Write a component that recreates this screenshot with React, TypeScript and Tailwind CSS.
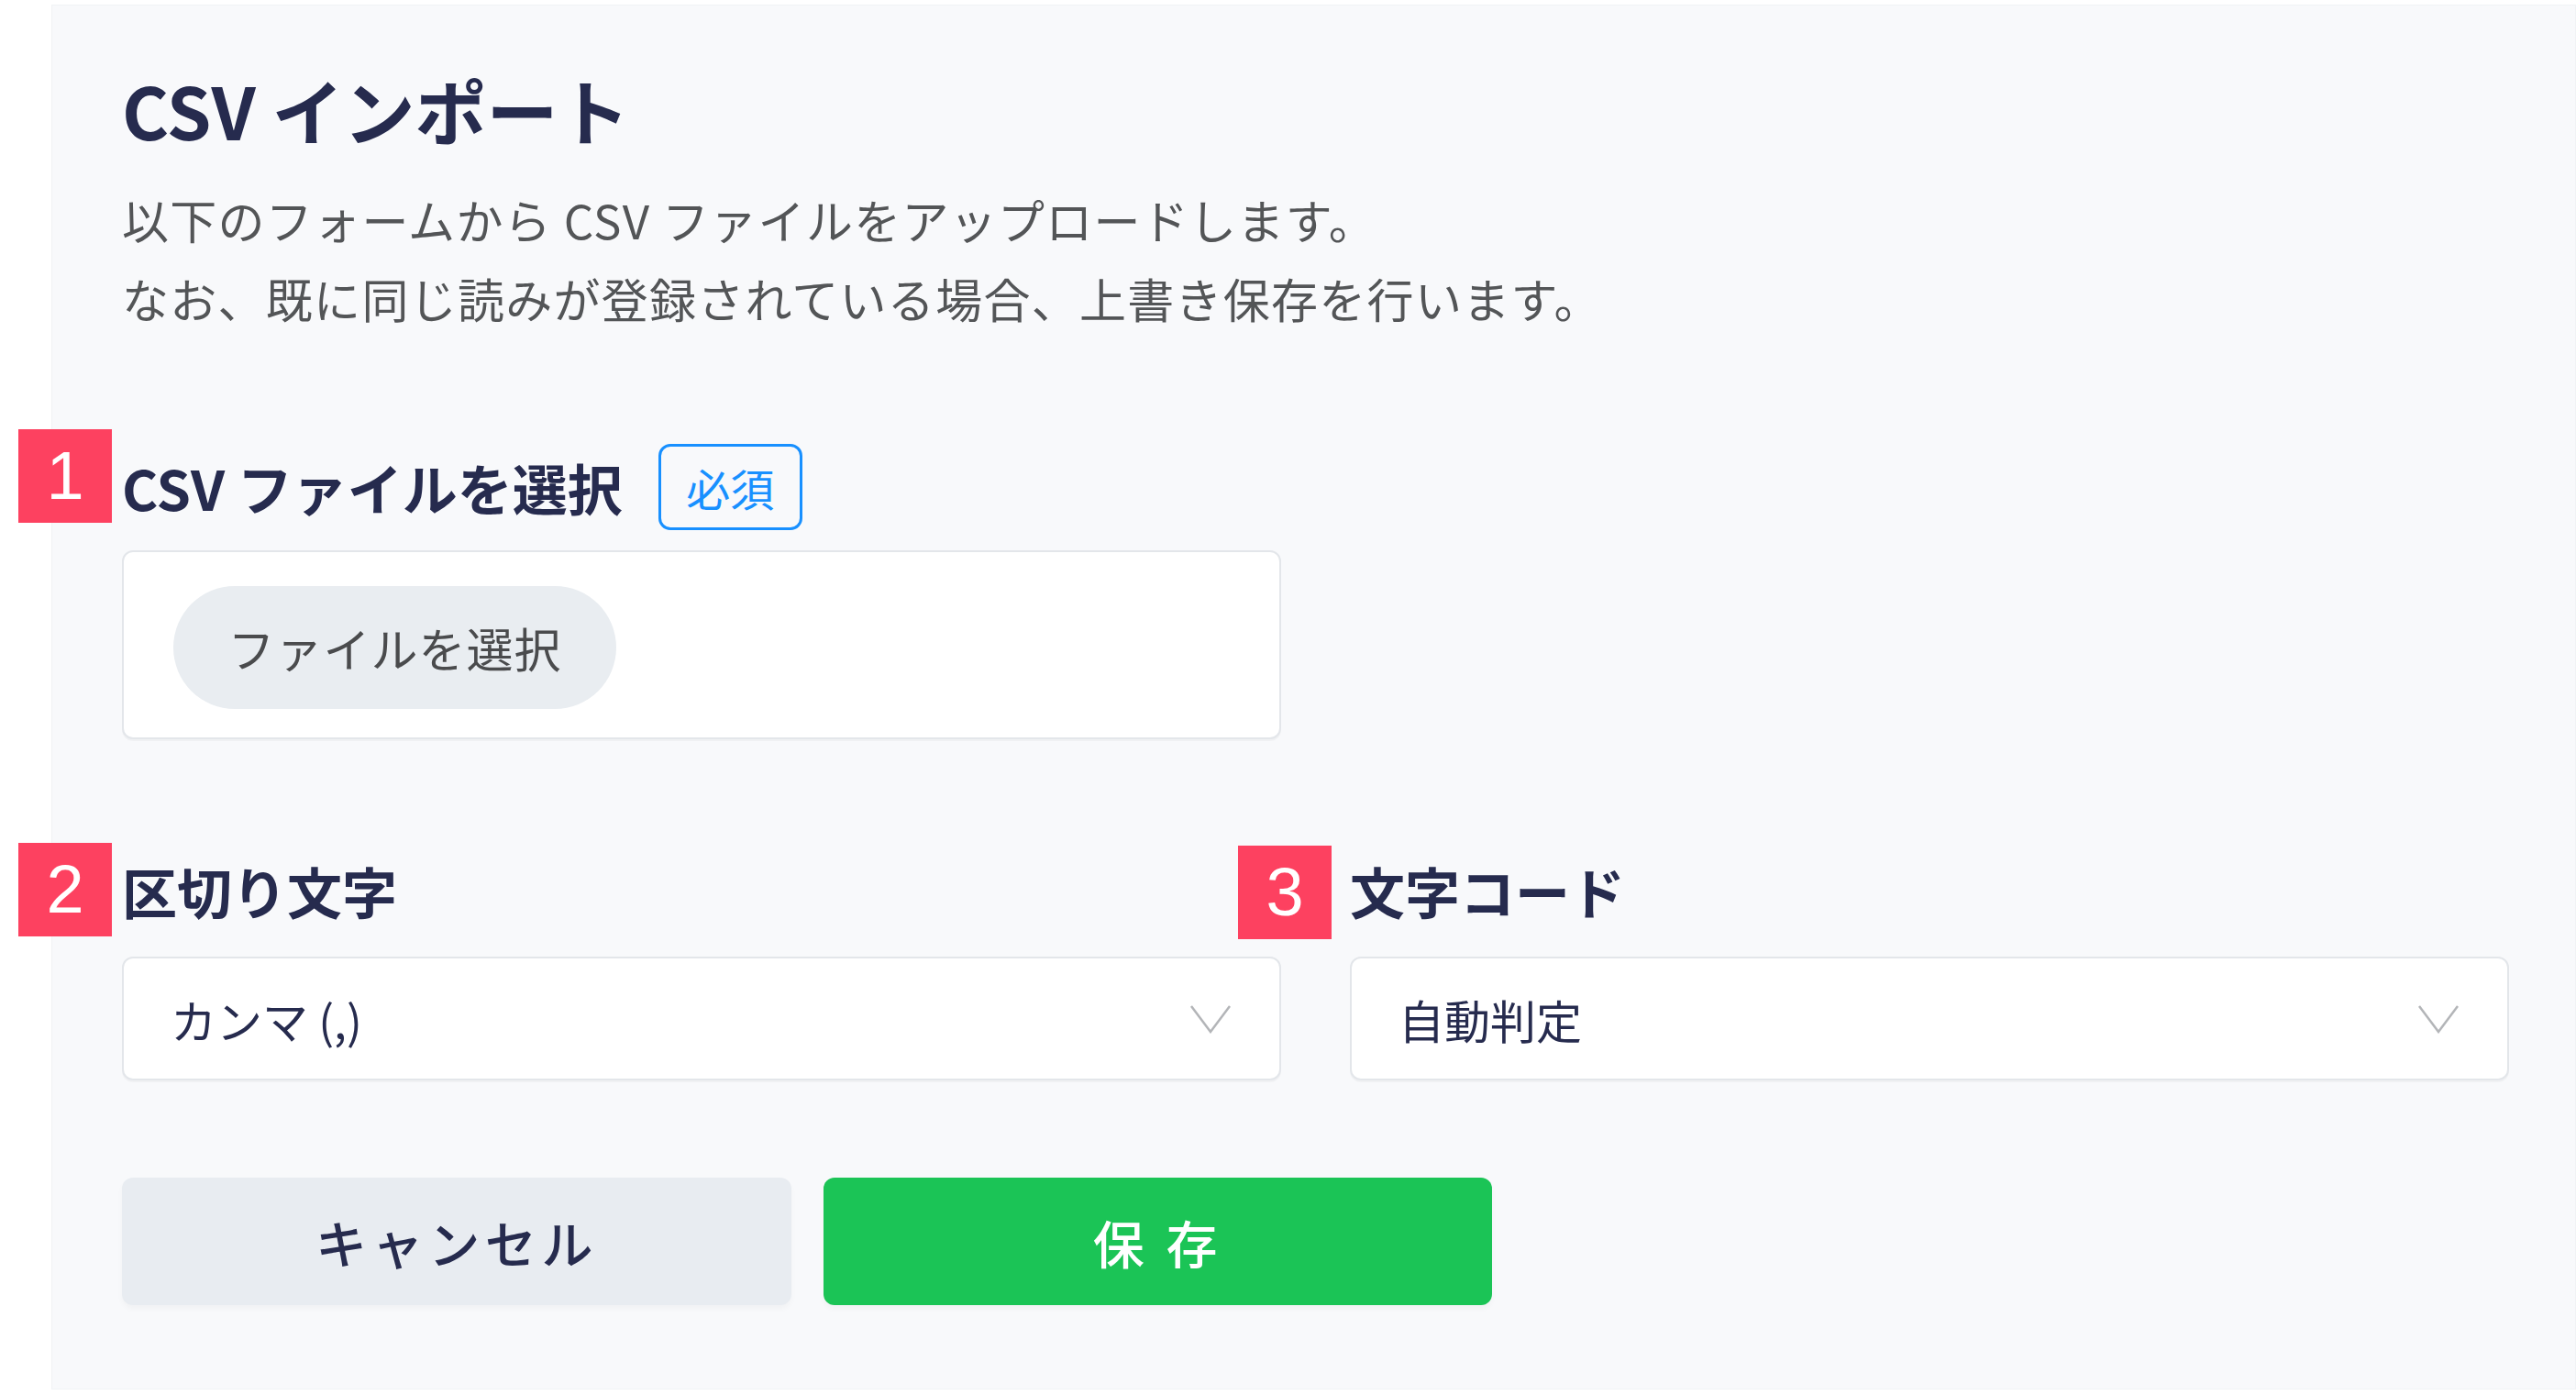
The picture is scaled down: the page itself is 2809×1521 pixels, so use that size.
import React from 'react'

const StepBadge = ({ n, className }: { n: string; className: string }) => (
  <span
    className={`absolute flex h-[102px] w-[102px] items-center justify-center bg-[#fd4160] font-['Liberation_Sans',sans-serif] text-[74px] leading-none text-white ${className}`}
  >
    {n}
  </span>
)

const Chevron = () => (
  <svg width="46" height="32" viewBox="0 0 46 32" fill="none" className="shrink-0">
    <polyline points="2,2 23,30 44,2" stroke="#b3b5b8" strokeWidth="2.5" strokeLinejoin="miter" />
  </svg>
)

const SelectBox = ({ value }: { value: string }) => (
  <div className="mt-[25px] flex h-[135px] items-center justify-between rounded-[12px] border-2 border-[#e3e6ea] bg-white pl-[51px] pr-[52px] shadow-[0_2px_0_rgba(0,0,0,0.03)]">
    <span className="text-[50px] leading-none text-[#262b4e]">{value}</span>
    <Chevron />
  </div>
)

export default function App() {
  return (
    <div className="min-h-screen w-full bg-white pl-[56px] pt-[5px] font-['Noto_Sans_CJK_JP','Noto_Sans',sans-serif]">
      <div className="h-[1510px] border border-[#f1f3f5] bg-[#f8f9fb] pl-[76px] pr-[72px] pt-[66px]">
        {/* header */}
        <h1 className="text-[78px] font-bold leading-[94px] text-[#262b4e]">CSV インポート</h1>
        <div className="mt-[30px] text-[51px] leading-[86px] tracking-[0.025em] text-[#535557]">
          <p>以下のフォームから CSV ファイルをアップロードします。</p>
          <p>なお、既に同じ読みが登録されている場合、上書き保存を行います。</p>
        </div>

        {/* 1: file */}
        <div className="relative mt-[116px] flex h-[94px] items-center gap-[39px]">
          <StepBadge n="1" className="left-[-113px] top-[-16px]" />
          <span className="text-[60px] font-bold leading-none text-[#262b4e]">CSV ファイルを選択</span>
          <span className="flex h-[94px] w-[157px] items-center justify-center rounded-[13px] border-[3px] border-[#1890ff] text-[48px] leading-none text-[#1890ff]">
            必須
          </span>
        </div>
        <div className="mt-[22px] h-[206px] w-[1264px] rounded-[12px] border-2 border-[#e3e6ea] bg-white pl-[54px] pt-[37px] shadow-[0_2px_0_rgba(0,0,0,0.03)]">
          <button className="flex h-[134px] w-[483px] items-center justify-center rounded-full bg-[#e9edf1] text-[51px] tracking-[0.02em] text-[#4a4b4d]">
            ファイルを選択
          </button>
        </div>

        {/* 2, 3: selects */}
        <div className="mt-[118px] grid grid-cols-2 gap-x-[75px]">
          <div>
            <div className="relative flex h-[94px] items-center">
              <StepBadge n="2" className="left-[-113px] top-[-5px]" />
              <span className="text-[60px] font-bold leading-none text-[#262b4e]">区切り文字</span>
            </div>
            <SelectBox value="カンマ (,)" />
          </div>
          <div>
            <div className="relative flex h-[94px] items-center">
              <StepBadge n="3" className="left-[-122px] top-[-2px]" />
              <span className="text-[60px] font-bold leading-none text-[#262b4e]">文字コード</span>
            </div>
            <SelectBox value="自動判定" />
          </div>
        </div>

        {/* actions */}
        <div className="mt-[106px] flex gap-[35px]">
          <button className="h-[139px] w-[730px] rounded-[12px] bg-[#e8ecf1] text-[56px] font-medium tracking-[0.1em] text-[#262b4e] shadow-[0_4px_6px_rgba(0,0,0,0.03)]">
            キャンセル
          </button>
          <button className="h-[139px] w-[729px] rounded-[12px] bg-[#1bc456] text-[56px] font-medium tracking-[0.1em] text-white shadow-[0_4px_6px_rgba(0,0,0,0.03)]">
            保 存
          </button>
        </div>
      </div>
    </div>
  )
}
